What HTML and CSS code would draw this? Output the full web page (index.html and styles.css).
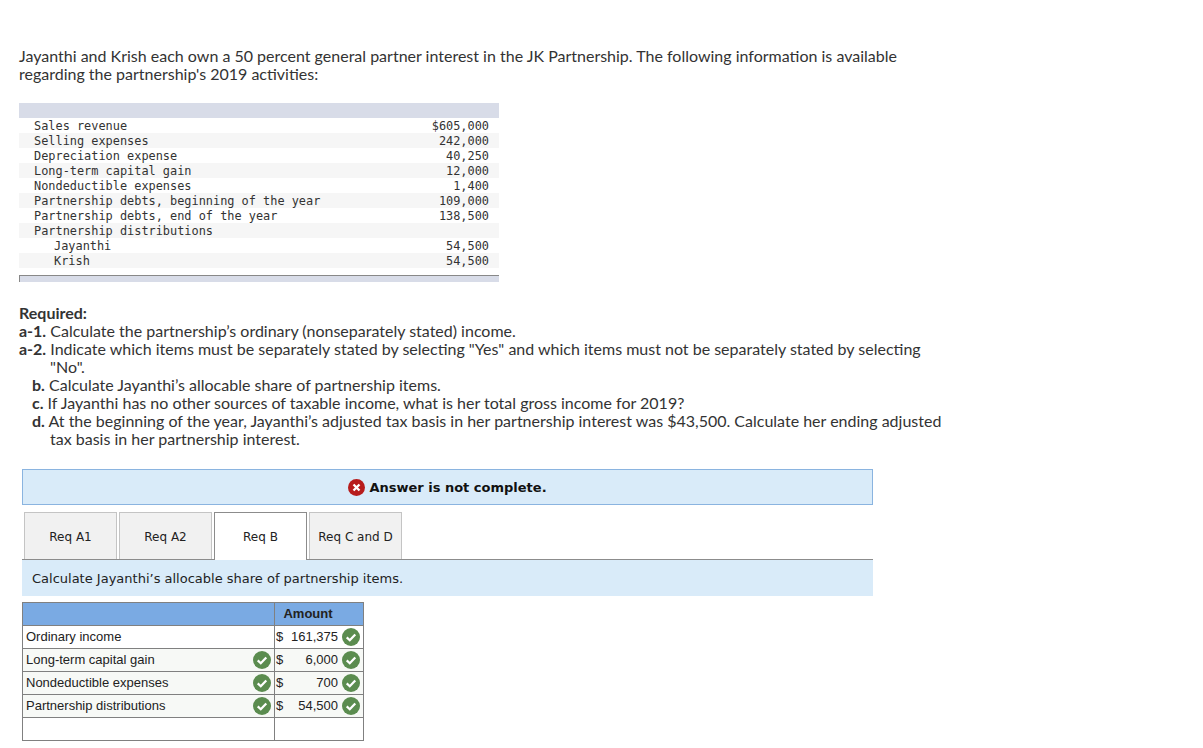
FILE: index.html
```html
<!DOCTYPE html>
<html lang="en">
<head>
    <meta charset="UTF-8">
    <meta name="viewport" content="width=device-width, initial-scale=1.0">
    <title>JK Partnership</title>
    <link rel="stylesheet" href="styles.css">
</head>
<body>

    <p class="intro">Jayanthi and Krish each own a 50 percent general partner interest in the JK Partnership. The following information is available regarding the partnership's 2019 activities:</p>

    <div class="data-table">
        <div class="band"></div>
        <div class="data-row"><span>Sales revenue</span><span>$605,000</span></div>
        <div class="data-row"><span>Selling expenses</span><span>242,000</span></div>
        <div class="data-row"><span>Depreciation expense</span><span>40,250</span></div>
        <div class="data-row"><span>Long-term capital gain</span><span>12,000</span></div>
        <div class="data-row"><span>Nondeductible expenses</span><span>1,400</span></div>
        <div class="data-row"><span>Partnership debts, beginning of the year</span><span>109,000</span></div>
        <div class="data-row"><span>Partnership debts, end of the year</span><span>138,500</span></div>
        <div class="data-row"><span>Partnership distributions</span><span></span></div>
        <div class="data-row sub"><span>Jayanthi</span><span>54,500</span></div>
        <div class="data-row sub"><span>Krish</span><span>54,500</span></div>
        <div class="band-end"></div>
    </div>

    <div class="required">
        <p><b>Required:</b></p>
        <p class="hang"><b>a-1.</b> Calculate the partnership’s ordinary (nonseparately stated) income.</p>
        <p class="hang"><b>a-2.</b> Indicate which items must be separately stated by selecting "Yes" and which items must not be separately stated by selecting "No".</p>
        <p class="hang inner"><b>b.</b> Calculate Jayanthi’s allocable share of partnership items.</p>
        <p class="hang inner"><b>c.</b> If Jayanthi has no other sources of taxable income, what is her total gross income for 2019?</p>
        <p class="hang inner"><b>d.</b> At the beginning of the year, Jayanthi’s adjusted tax basis in her partnership interest was $43,500. Calculate her ending adjusted tax basis in her partnership interest.</p>
    </div>

    <div class="answer-box">
        <svg class="icon" viewBox="0 0 16 16" width="17" height="17"><circle cx="8" cy="8" r="8" fill="#b71c1c"/><path d="M5.2 5.2l5.6 5.6M10.8 5.2l-5.6 5.6" stroke="#fff" stroke-width="2.2" fill="none"/></svg>
        <span>Answer is not complete.</span>
    </div>

    <div class="tabs">
        <div class="tab">Req A1</div>
        <div class="tab">Req A2</div>
        <div class="tab active">Req B</div>
        <div class="tab">Req C and D</div>
    </div>
    <div class="prompt">Calculate Jayanthi’s allocable share of partnership items.</div>

    <table class="answer-table">
        <tr class="head">
            <th></th>
            <th>Amount</th>
        </tr>
        <tr>
            <td>Ordinary income</td>
            <td><div class="amount"><span>$</span><span class="num">161,375</span><svg class="check" viewBox="0 0 16 16" width="18" height="18"><circle cx="8" cy="8" r="8" fill="#5b8c4f"/><path d="M4.2 8.4l2.7 2.5 4.9-5.2" stroke="#fff" stroke-width="2" fill="none"/></svg></div></td>
        </tr>
        <tr class="tint">
            <td><div class="label"><span>Long-term capital gain</span><svg class="check" viewBox="0 0 16 16" width="18" height="18"><circle cx="8" cy="8" r="8" fill="#5b8c4f"/><path d="M4.2 8.4l2.7 2.5 4.9-5.2" stroke="#fff" stroke-width="2" fill="none"/></svg></div></td>
            <td><div class="amount"><span>$</span><span class="num">6,000</span><svg class="check" viewBox="0 0 16 16" width="18" height="18"><circle cx="8" cy="8" r="8" fill="#5b8c4f"/><path d="M4.2 8.4l2.7 2.5 4.9-5.2" stroke="#fff" stroke-width="2" fill="none"/></svg></div></td>
        </tr>
        <tr class="tint">
            <td><div class="label"><span>Nondeductible expenses</span><svg class="check" viewBox="0 0 16 16" width="18" height="18"><circle cx="8" cy="8" r="8" fill="#5b8c4f"/><path d="M4.2 8.4l2.7 2.5 4.9-5.2" stroke="#fff" stroke-width="2" fill="none"/></svg></div></td>
            <td><div class="amount"><span>$</span><span class="num">700</span><svg class="check" viewBox="0 0 16 16" width="18" height="18"><circle cx="8" cy="8" r="8" fill="#5b8c4f"/><path d="M4.2 8.4l2.7 2.5 4.9-5.2" stroke="#fff" stroke-width="2" fill="none"/></svg></div></td>
        </tr>
        <tr class="tint">
            <td><div class="label"><span>Partnership distributions</span><svg class="check" viewBox="0 0 16 16" width="18" height="18"><circle cx="8" cy="8" r="8" fill="#5b8c4f"/><path d="M4.2 8.4l2.7 2.5 4.9-5.2" stroke="#fff" stroke-width="2" fill="none"/></svg></div></td>
            <td><div class="amount"><span>$</span><span class="num">54,500</span><svg class="check" viewBox="0 0 16 16" width="18" height="18"><circle cx="8" cy="8" r="8" fill="#5b8c4f"/><path d="M4.2 8.4l2.7 2.5 4.9-5.2" stroke="#fff" stroke-width="2" fill="none"/></svg></div></td>
        </tr>
        <tr>
            <td></td>
            <td></td>
        </tr>
    </table>

</body>
</html>
```

FILE: styles.css
```css
body {
    font-family: Lato, "Open Sans", sans-serif;
    font-size: 16px;
    line-height: 18px;
    margin: 0;
    padding: 47px 0 0 19px;
    background: #fff;
    color: #333;
    overflow: hidden;
}

p {
    margin: 0;
}

.intro {
    width: 900px;
}

.data-table {
    width: 480px;
    margin-top: 20px;
    font-family: "DejaVu Sans Mono", monospace;
    font-size: 11.9px;
    line-height: 15px;
    color: #333;
}

.band {
    height: 15px;
    background-color: #d8dce8;
}

.band-end {
    height: 6px;
    margin-top: 7px;
    background-color: #d8dce8;
    border-top: 1px solid #888;
    border-left: 1px solid #888;
}

.data-row {
    display: flex;
    justify-content: space-between;
    height: 15px;
    line-height: 17px;
    padding: 0 10px 0 15px;
}

.data-row:nth-child(odd) {
    background-color: #f6f6f6;
}

.data-row.sub {
    padding-left: 35px;
}

.required {
    width: 930px;
    margin-top: 22px;
}

.required b {
    font-weight: 700;
}

.hang {
    padding-left: 31px;
    text-indent: -31px;
}

.hang.inner {
    margin-left: 13px;
    padding-left: 18px;
    text-indent: -18px;
}

.answer-box {
    display: flex;
    align-items: center;
    justify-content: center;
    gap: 4px;
    width: 849px;
    height: 34px;
    margin: 21px 0 0 3px;
    background-color: #d9ebf9;
    border: 1px solid #8ab4e0;
    font-family: "DejaVu Sans", sans-serif;
    font-size: 13px;
    font-weight: 700;
    line-height: 20px;
    color: #111;
}

.answer-box span {
    padding-top: 1px;
}

.tabs {
    display: flex;
    gap: 2px;
    width: 849px;
    height: 47px;
    margin: 7px 0 0 3px;
    padding-left: 2px;
    border-bottom: 1px solid #8c8c8c;
    font-family: "DejaVu Sans", sans-serif;
    font-size: 12px;
    color: #222;
}

.tab {
    display: flex;
    align-items: center;
    justify-content: center;
    width: 91px;
    height: 45px;
    padding-top: 1px;
    background-color: #f1f1f1;
    border: 1px solid #c4c4c4;
    border-bottom: none;
}

.tab.active {
    height: 46px;
    background-color: #fff;
    border-color: #8c8c8c;
}

.prompt {
    width: 841px;
    height: 36px;
    margin-left: 3px;
    padding-left: 10px;
    background-color: #d9ebf9;
    font-family: "DejaVu Sans", sans-serif;
    font-size: 13px;
    line-height: 38px;
    color: #222;
}

.answer-table {
    width: 342px;
    margin: 6px 0 0 3px;
    border-collapse: collapse;
    table-layout: fixed;
    font-family: "Liberation Sans", sans-serif;
    font-size: 13px;
    line-height: 14px;
    color: #222;
}

.answer-table th, .answer-table td {
    height: 22px;
    padding: 0 3px;
    border: 1px solid #808080;
}

.answer-table th {
    background-color: #7aaae3;
    font-size: 13px;
}

.answer-table th:first-child {
    width: 245px;
}

.answer-table th:last-child {
    padding-right: 25px;
}

.answer-table td:last-child {
    padding-left: 1px;
}

.tint td {
    background-color: #f7f9f6;
}

.label, .amount {
    display: flex;
    align-items: center;
    justify-content: space-between;
}

.amount .num {
    margin-left: auto;
    margin-right: 4px;
}

.check {
    flex-shrink: 0;
}
```
